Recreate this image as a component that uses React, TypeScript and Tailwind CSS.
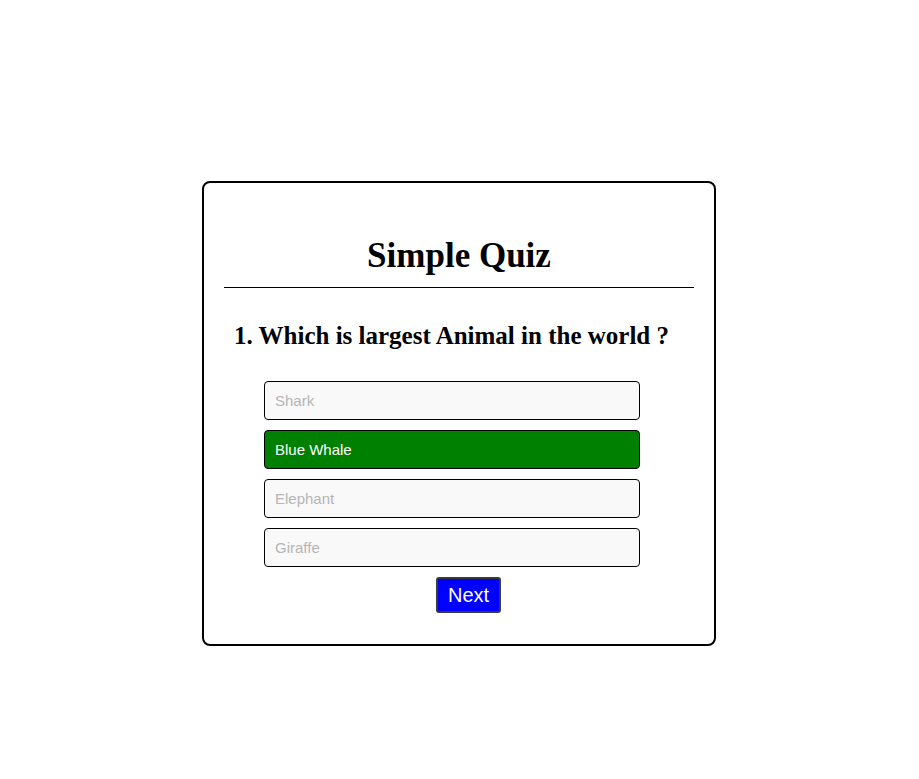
export default function App() {
  const options = ["Shark", "Blue Whale", "Elephant", "Giraffe"];
  const selected = 1;
  return (
    <div className="w-[919px] h-[779px] bg-white pt-[181px] overflow-hidden">
      <div className="ml-[202px] w-[514px] h-[465px] border-2 border-black rounded-[8px] px-[20px] pt-[53px] box-border">
        <h1
          className="text-center font-bold text-[35px] leading-[40px] text-black"
          style={{ fontFamily: '"Liberation Serif", "Times New Roman", serif' }}
        >
          Simple Quiz
        </h1>
        <div className="mt-[11px] h-px bg-black" />
        <h2
          className="mt-[34px] pl-[10px] font-bold text-[25px] leading-[28px] text-black"
          style={{ fontFamily: '"Liberation Serif", "Times New Roman", serif' }}
        >
          1. Which is largest Animal in the world ?
        </h2>
        <div
          className="mt-[31px] ml-[40px] w-[376px] flex flex-col gap-[10px]"
          style={{ fontFamily: '"Liberation Sans", Arial, sans-serif' }}
        >
          {options.map((o, i) => (
            <div
              key={o}
              className={
                i === selected
                  ? "h-[39px] border border-black rounded-[4px] bg-[#008000] text-white text-[15px] pl-[10px] pt-[1px] flex items-center"
                  : "h-[39px] border border-black rounded-[4px] bg-[#f9f9f9] text-[#b5b5b5] text-[15px] pl-[10px] pt-[1px] flex items-center"
              }
            >
              {o}
            </div>
          ))}
        </div>
        <div className="mt-[10px] ml-[212px]">
          <button
            className="w-[65px] h-[36px] border-2 border-[#3a3a3a] rounded-[3px] bg-[#0000ff] text-white text-[20px] flex items-center justify-center"
            style={{ fontFamily: '"Liberation Sans", Arial, sans-serif' }}
          >
            Next
          </button>
        </div>
      </div>
    </div>
  );
}
